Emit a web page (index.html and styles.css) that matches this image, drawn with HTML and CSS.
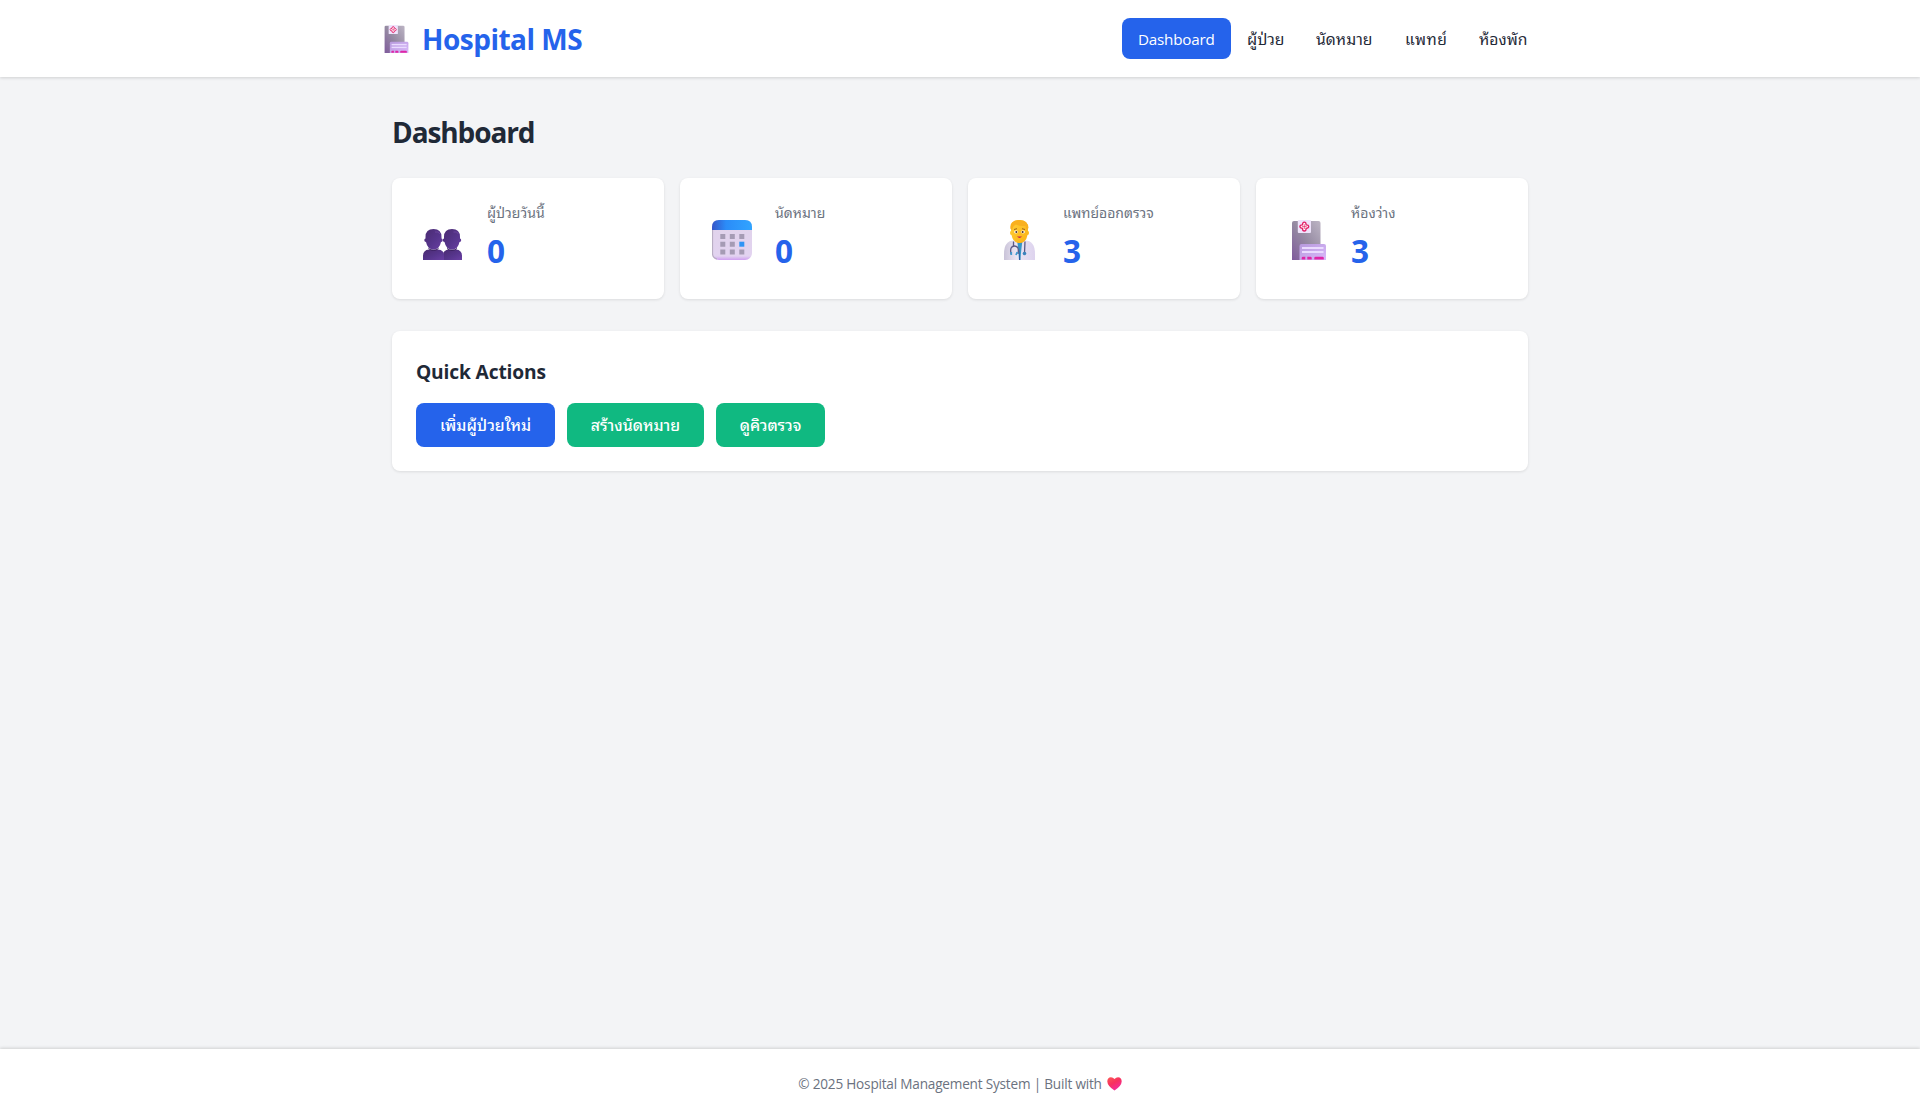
FILE: index.html
```html
<!DOCTYPE html>
<html lang="th">
<head>
<meta charset="utf-8">
<title>Hospital MS</title>
<link rel="stylesheet" href="styles.css">
</head>
<body>
<svg width="0" height="0" class="defs" aria-hidden="true">
  <defs>
    <linearGradient id="tower" x1="0" y1="1" x2="1" y2="0"><stop offset="0" stop-color="#7f5a9c"/><stop offset=".5" stop-color="#958aa2"/><stop offset="1" stop-color="#bdb5c5"/></linearGradient>
    <linearGradient id="wing" x1="0" y1="0" x2="1" y2="1"><stop offset="0" stop-color="#b79add"/><stop offset="1" stop-color="#d9b8fb"/></linearGradient>
    <linearGradient id="person" x1="0" y1="0" x2="1" y2="1"><stop offset="0" stop-color="#4a2a70"/><stop offset=".55" stop-color="#56358c"/><stop offset="1" stop-color="#6a3fa3"/></linearGradient>
    <linearGradient id="calTop" x1="0" y1="0" x2="1" y2="0"><stop offset="0" stop-color="#3555c8"/><stop offset=".35" stop-color="#2b8cf8"/><stop offset="1" stop-color="#31a4ff"/></linearGradient>
    <linearGradient id="calBody" x1="0" y1="0" x2="0" y2="1"><stop offset="0" stop-color="#e0d3ea"/><stop offset=".9" stop-color="#e2d3f0"/><stop offset="1" stop-color="#cf9ff0"/></linearGradient>
    <linearGradient id="skin" x1="0" y1="0" x2="1" y2="1"><stop offset="0" stop-color="#ffd03a"/><stop offset="1" stop-color="#fbb012"/></linearGradient>
    <linearGradient id="coat" x1="0" y1="0" x2="1" y2="0"><stop offset="0" stop-color="#c9c3d8"/><stop offset=".4" stop-color="#ebe6f4"/><stop offset="1" stop-color="#ddd3ee"/></linearGradient>
    <linearGradient id="heart" x1="0" y1="0" x2=".6" y2="1"><stop offset="0" stop-color="#fb5a55"/><stop offset=".5" stop-color="#f8305f"/><stop offset="1" stop-color="#f32ba0"/></linearGradient>
    <symbol id="hospital" viewBox="0 0 34 40">
      <path d="M0 3Q0 1 2 1H26.500Q28.500 1 28.500 3V40H0Z" fill="url(#tower)"/>
      <path d="M7.500 26Q7.500 24 9.500 24H32Q34 24 34 26V40H7.500Z" fill="url(#wing)"/>
      <rect x="10" y="27" width="21.500" height="2" fill="#eadbff"/><rect x="10" y="31" width="21.500" height="2" fill="#eadbff"/>
      <path d="M9.700 39.500V38Q9.700 36.700 11 36.700H13.300V39.500ZM15.300 39.500V36.700H18.500Q19.700 36.700 19.700 38V39.500ZM22.300 39.500V38Q22.300 36.700 23.600 36.700H30.500Q31.800 36.700 31.800 38V39.500Z" fill="#df26a6"/>
      <rect x="5.800" y="0" width="13.200" height="13" rx="1" fill="#eee3fb"/>
      <path d="M10.500 4.800Q10.500 2.200 12.300 2.200T14.100 4.800Q16.700 4.800 16.700 6.600T14.100 8.400Q14.100 11 12.300 11T10.500 8.400Q7.900 8.400 7.900 6.600T10.500 4.800Z" fill="#fff" stroke="#e21e68" stroke-width="1.300"/>
      <path d="M12.300 4.200V9M9.900 6.600H14.700" stroke="#e21e68" stroke-width=".7"/>
    </symbol>
    <symbol id="people" viewBox="0 0 39 31">
      <g fill="url(#person)">
        <path d="M20 31V26Q20 21 26 20.500H33Q39 21 39 27V31Z"/>
        <path d="M29 0Q37 0 37 8V9.500Q38.200 9.500 38.200 11.300T36.500 13Q35 20.500 29 20.500T21.500 13Q19.800 13 19.800 11.300T21 9.500V8Q21 0 29 0Z"/>
        <path d="M0 31V27Q0 21 6 20.500H15Q21 21 21 26V31Z"/>
        <path d="M10.500 0Q18.500 0 18.500 8V9.500Q19.700 9.500 19.700 11.300T18 13Q16.500 20.500 10.500 20.500T3 13Q1.300 13 1.300 11.300T2.500 9.500V8Q2.500 0 10.500 0Z"/>
      </g>
      <path d="M5.500 19.500Q10.500 23.500 15.500 19.500M24 19.500Q29 23.500 34 19.500" fill="none" stroke="#3d2263" stroke-width="1"/>
      <path d="M12 3Q16 2 16.800 5M30.500 3Q34.500 2 35.300 5" fill="none" stroke="#6b459d" stroke-width="1"/>
    </symbol>
    <symbol id="calendar" viewBox="0 0 40 40">
      <rect width="40" height="40" rx="7" fill="url(#calBody)"/>
      <path d="M.5 10V33Q.5 38 5 39" fill="none" stroke="#b9aec4" stroke-width="1.200"/>
      <path d="M0 10V7Q0 0 7 0H33Q40 0 40 7V10Z" fill="url(#calTop)"/>
      <path d="M8.300 14h5v5h-5zM17.800 14h5v5h-5zM27.300 14h5v5h-5zM8.300 21.700h5v5h-5zM17.800 21.700h5v5h-5zM8.300 29.400h5v5h-5zM17.800 29.400h5v5h-5zM27.300 29.400h5v5h-5z" fill="#a59bb4"/>
      <rect x="27.300" y="21.700" width="5" height="5" fill="#2f94f5"/>
    </symbol>
    <symbol id="doctor" viewBox="0 0 31 40">
      <path d="M0 40V34Q0 20.500 10 20.500H21Q31 20.500 31 34V40Z" fill="url(#coat)"/>
      <path d="M13 20H18.500L17.500 28L16.300 40H15L14 27Z" fill="#3696c6"/>
      <path d="M15.500 27L15 40H16.300Z" fill="#2b62a5"/>
      <path d="M11 18H20V21Q15.500 25 11 21Z" fill="#e99111"/>
      <path d="M7 8Q7 0 15.500 0T24 8V11Q25 11 25 13T23.500 15Q22 23 15.500 23T7.500 15Q6 15 6 13T7 11Z" fill="url(#skin)"/>
      <path d="M6.500 9Q5 1 14 0Q24 -.5 24.500 8L22.800 10L21.500 6Q15 6 12 4.500Q8.500 6 8.300 10Z" fill="#f9b01f"/>
      <path d="M10 9.500L13 8.700M18 8.700L21 9.500" stroke="#9d641b" stroke-width="1"/>
      <ellipse cx="12" cy="12" rx="1.800" ry="1.400" fill="#fff"/><ellipse cx="19" cy="12" rx="1.800" ry="1.400" fill="#fff"/>
      <circle cx="12.300" cy="12" r="1" fill="#4d3228"/><circle cx="18.700" cy="12" r="1" fill="#4d3228"/>
      <path d="M13 16.500H18Q15.500 19.300 13 16.500Z" fill="#c51f4e"/>
      <path d="M9.500 21.500V26M7 34Q5.500 26 10.500 26T14 34M21 21.500L20.500 33" fill="none" stroke="#5b5a86" stroke-width="1.300"/>
      <path d="M7.200 32V35M13.300 32L12 35" stroke="#3f9bd0" stroke-width="1.800"/><circle cx="20.500" cy="33.500" r="1.800" fill="#3c83bc"/>
    </symbol>
  </defs>
</svg>

<header class="topbar">
  <div class="topbar-inner">
    <div class="brand"><svg class="brand-icon"><use href="#hospital"/></svg><span class="brand-name">Hospital MS</span></div>
    <nav class="nav">
      <a class="nav-link active">Dashboard</a>
      <a class="nav-link patients">ผู้ป่วย</a>
      <a class="nav-link appointments">นัดหมาย</a>
      <a class="nav-link doctors">แพทย์</a>
      <a class="nav-link rooms">ห้องพัก</a>
    </nav>
  </div>
</header>

<main class="main">
  <h1 class="title">Dashboard</h1>
  <section class="stats">
    <article class="card stat"><div class="stat-icon"><svg class="i-people"><use href="#people"/></svg></div><div><h3 class="stat-label">ผู้ป่วยวันนี้</h3><p class="stat-value">0</p></div></article>
    <article class="card stat"><div class="stat-icon"><svg class="i-calendar"><use href="#calendar"/></svg></div><div><h3 class="stat-label">นัดหมาย</h3><p class="stat-value">0</p></div></article>
    <article class="card stat"><div class="stat-icon"><svg class="i-doctor"><use href="#doctor"/></svg></div><div><h3 class="stat-label">แพทย์ออกตรวจ</h3><p class="stat-value">3</p></div></article>
    <article class="card stat"><div class="stat-icon"><svg class="i-hospital"><use href="#hospital"/></svg></div><div><h3 class="stat-label">ห้องว่าง</h3><p class="stat-value">3</p></div></article>
  </section>
  <section class="card quick">
    <h2 class="quick-title">Quick Actions</h2>
    <div class="actions">
      <button class="btn primary">เพิ่มผู้ป่วยใหม่</button>
      <button class="btn book">สร้างนัดหมาย</button>
      <button class="btn queue">ดูคิวตรวจ</button>
    </div>
  </section>
</main>

<footer class="footer"><span class="footer-text">© 2025 Hospital Management System | Built with</span><svg class="heart" viewBox="0 0 15 14"><path d="M7.500 2Q9 .3 11 .3Q14.700 .5 14.700 4.500Q14.500 9 7.500 13.500Q.5 9 .3 4.500Q.3 .5 4 .3Q6 .3 7.500 2Z" fill="url(#heart)"/></svg></footer>
</body>
</html>
```
FILE: styles.css
```css
* { margin: 0; padding: 0; box-sizing: border-box; }
body {
  min-height: 100vh;
  display: flex;
  flex-direction: column;
  background: #f3f4f6;
  color: #1f2937;
  font-family: "Open Sans", "Noto Sans", "Noto Sans Thai Looped", "Loma", "Noto Sans Thai", sans-serif;
  font-size: 16px;
  line-height: 1.6;
  white-space: nowrap;
}
.defs { position: absolute; }
.topbar { height: 77px; background: #fff; box-shadow: 0 1px 3px rgba(0, 0, 0, .15); }
.topbar-inner { width: 1168px; height: 77px; margin: 0 auto; padding: 0 0 0 8px; display: flex; align-items: center; justify-content: space-between; }
.brand { display: flex; align-items: center; gap: 13px; color: #2563eb; }
.brand-icon { width: 25px; height: 28px; }
.brand-name { font-size: 28px; font-weight: 700; line-height: 46px; letter-spacing: -.5px; }
.nav { display: flex; }
.nav-link { height: 41px; padding: 1px 0 0 16px; border-radius: 8px; line-height: 40px; font-size: 15.700px; }
.active { width: 109px; background: #2563eb; color: #fff; font-size: 15.200px; letter-spacing: -.2px; }
.patients { width: 69px; }
.appointments { width: 89px; }
.doctors { width: 74px; letter-spacing: .5px; }
.rooms { width: 81px; }

.main { flex: 1; width: 1136px; margin: 0 auto; padding-top: 32px; }
.title { height: 45px; padding-top: 1px; font-size: 28px; font-weight: 700; line-height: 45px; letter-spacing: -1.100px; margin-bottom: 24px; }
.card { background: #fff; border-radius: 8px; box-shadow: 0 1px 3px rgba(0, 0, 0, .1); }
.stats { display: grid; grid-template-columns: repeat(4, 1fr); gap: 16px; margin-bottom: 32px; }
.stat { height: 121px; padding: 24px; display: flex; gap: 16px; }
.stat-icon { width: 55px; height: 58px; display: flex; align-items: flex-end; justify-content: center; }
.i-people { width: 39px; height: 31px; margin-right: 2px; }
.i-calendar { width: 40px; height: 40px; }
.i-doctor { width: 31px; height: 40px; }
.i-hospital { width: 34px; height: 40px; margin-left: 2px; }
.stat-label { font-size: 14px; font-weight: 400; line-height: 22px; color: #6b7280; }
.stat-value { padding-top: 1px; font-size: 31.500px; font-weight: 700; line-height: 51px; color: #2563eb; }
.quick { height: 140px; padding: 24px; }
.quick-title { height: 32px; padding-top: 1px; font-size: 19.200px; font-weight: 700; line-height: 32px; letter-spacing: -.15px; margin-bottom: 16px; }
.actions { display: flex; gap: 12px; }
.btn { height: 44px; width: 139px; border: 0; border-radius: 8px; background: #10b981; color: #fff; font-family: inherit; font-size: 15.800px; font-weight: 500; line-height: 44px; }
.primary { background: #2563eb; }
.book { width: 137px; }
.queue { width: 109px; letter-spacing: -.1px; }

.footer { height: 70px; display: flex; align-items: center; justify-content: center; gap: 5px; background: #fff; color: #6b7280; font-size: 13.600px; box-shadow: 0 -1px 3px rgba(0, 0, 0, .15); }
.footer-text { letter-spacing: -.200px; }
.heart { width: 15px; height: 14px; }
```
